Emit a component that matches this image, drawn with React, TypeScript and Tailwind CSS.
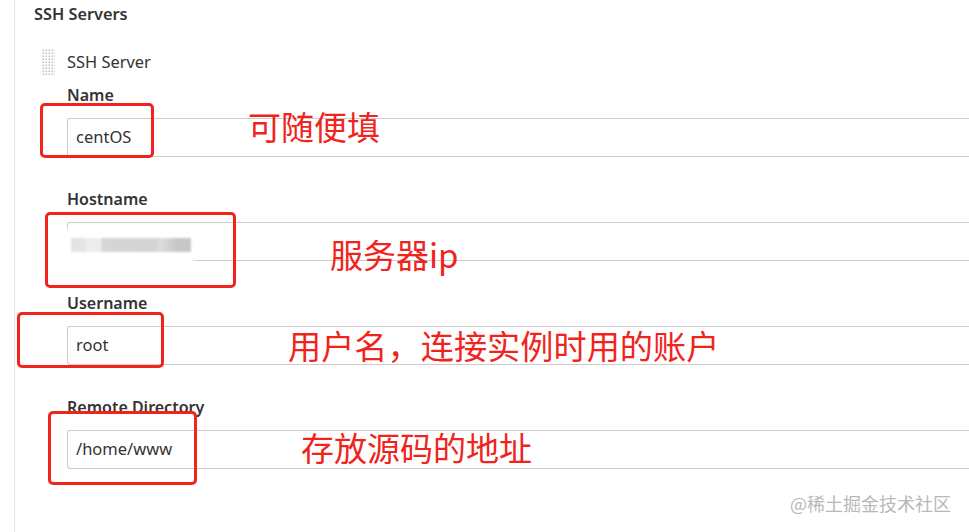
import React from "react";

const font = { fontFamily: '"Noto Sans", "Liberation Sans", sans-serif' };

function Field({ label, value, blurred }: { label: string; value?: string; blurred?: boolean }) {
  return (
    <div className="flex flex-col">
      <div className="h-[20px] leading-[20px] text-[16px] font-semibold text-[#333]">{label}</div>
      <div className="relative mt-[13px] h-[39px] border border-[#cccccc] rounded-l-[3px] border-r-0 flex items-center pl-[8px] text-[16.5px] text-[#333]">
        {value}
        {blurred && (
          <>
            <div className="absolute left-[-6px] top-[6px] w-[132px] h-[40px] bg-white blur-[2px]" />
            <div className="absolute left-[3px] top-[15px] w-[120px] h-[14px] blur-[1px] bg-[linear-gradient(90deg,#e4e4e4_0%,#e4e4e4_12%,#ededed_13%,#ededed_25%,#d6d6d6_26%,#d4d4d4_70%,#dcdcdc_75%,#c8c8c8_88%,#c6c6c6_100%)]" />
          </>
        )}
      </div>
    </div>
  );
}

function Handle() {
  return (
    <svg width="13" height="26" viewBox="0 0 13 26" className="shrink-0">
      {Array.from({ length: 9 }).map((_, r) =>
        Array.from({ length: 5 }).map((__, c) => (
          <rect key={`${r}-${c}`} x={c * 3 + 0.5} y={r * 3 + 0.5} width="1.6" height="1.6" fill="#c4c4c4" />
        ))
      )}
    </svg>
  );
}

const redText = { fontFamily: '"Noto Sans CJK SC", "Noto Sans", sans-serif' };

export default function App() {
  return (
    <div className="relative w-[969px] h-[532px] bg-white overflow-hidden" style={font}>
      <div className="ml-[14px] h-full border-l border-[#e6e6e6]">
        <div className="pl-[19px] pt-[4px] h-[20px] leading-[20px] text-[16.3px] font-semibold text-[#333] box-content">SSH Servers</div>
        <div className="mt-[24px] pl-[27px] flex items-center gap-[12px] h-[28px]">
          <Handle />
          <span className="text-[16.4px] text-[#333]">SSH Server</span>
        </div>
        <div className="mt-[9px] pl-[52px] flex flex-col gap-[32px]">
          <Field label="Name" value="centOS" />
          <Field label="Hostname" blurred />
          <Field label="Username" value="root" />
          <Field label="Remote Directory" value="/home/www" />
        </div>
      </div>

      {/* red annotation boxes */}
      <div className="absolute left-[40px] top-[103px] w-[114px] h-[55px] border-[3px] border-[#f0241c] rounded-[5px]" />
      <div className="absolute left-[45px] top-[212px] w-[191px] h-[76px] border-[3px] border-[#f0241c] rounded-[5px]" />
      <div className="absolute left-[17px] top-[312px] w-[147px] h-[56px] border-[3px] border-[#f0241c] rounded-[5px]" />
      <div className="absolute left-[48px] top-[411px] w-[149px] h-[74px] border-[3px] border-[#f0241c] rounded-[5px]" />

      {/* red annotation text */}
      <div className="absolute left-[248px] top-[110px] text-[33px] leading-none text-[#f0241c]" style={redText}>可随便填</div>
      <div className="absolute left-[330px] top-[238px] text-[33px] leading-none text-[#f0241c]" style={redText}>服务器ip</div>
      <div className="absolute left-[288px] top-[328px] text-[33.2px] leading-none text-[#f0241c]" style={redText}>用户名，连接实例时用的账户</div>
      <div className="absolute left-[301px] top-[431px] text-[33px] leading-none text-[#f0241c]" style={redText}>存放源码的地址</div>

      <div className="absolute left-[790px] top-[493px] text-[18px] leading-[20px] text-[#b8b8b8]" style={redText}>@稀土掘金技术社区</div>
    </div>
  );
}
